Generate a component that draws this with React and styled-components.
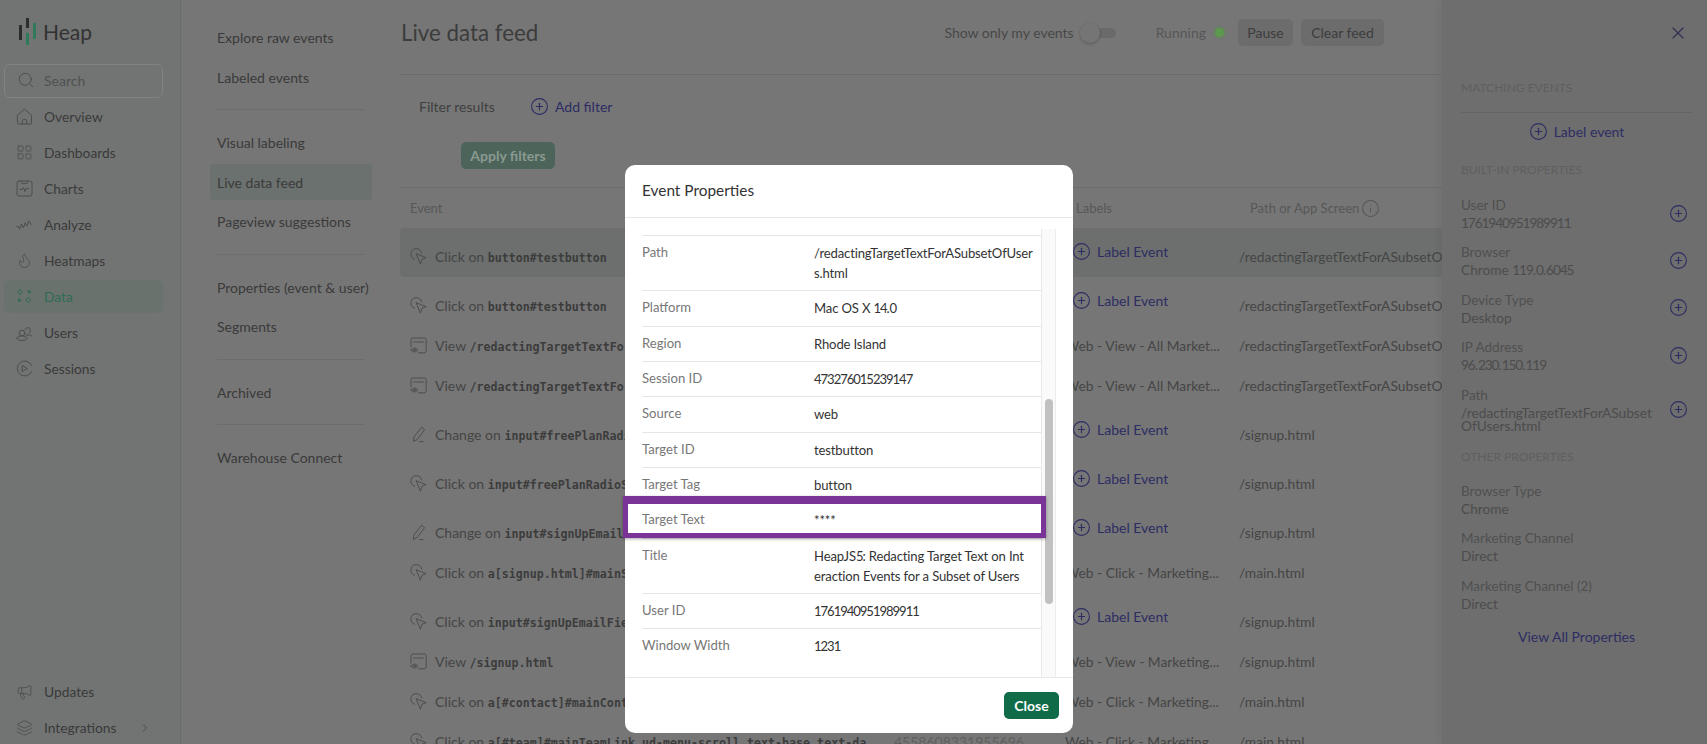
import React from 'react';
import styled, {createGlobalStyle} from 'styled-components';
import {Search, LayoutGrid, Flame, Megaphone, Layers, ChevronRight, CirclePlus, Info, X} from 'lucide-react';

const sans = `Lato, "Liberation Sans", sans-serif`;
const mono = `"DejaVu Sans Mono", "Liberation Mono", monospace`;
const iconGrey = '#4c4e4d';

const Global = createGlobalStyle`
    html, body { margin:0; height:100%; background:#767676; }
    body { font-family:${sans}; overflow:hidden; }
    #root { height:100%; }
    *, *::before, *::after { box-sizing:border-box; }
`;

//icons which the packages do not have
const Svg = styled.svg`
    flex:none;
    fill:none;
    stroke:${p => p.$color || iconGrey};
    stroke-width:1;
    stroke-linecap:round;
    stroke-linejoin:round;
`;
const ClickIcon = () => (
    <Svg width="17" height="17" viewBox="0 0 17 17">
        <path d="M4.6 11.2A5.4 5.4 0 1 1 11.6 5"/>
        <path d="M6.5 5.8l9.6 3.9-4 1.5-1.6 4.6z"/>
    </Svg>
);
const ViewIcon = () => (
    <Svg width="17" height="17" viewBox="0 0 17 17">
        <path d="M8.6 15.8h5.6a2 2 0 0 0 2-2V3a2 2 0 0 0-2-2H3a2 2 0 0 0-2 2v7"/>
        <path d="M3.6 5h9.6"/>
        <path d="M1 13c1-1.3 2.2-1.9 3.4-1.9s2.4.6 3.4 1.9c-1 1.3-2.2 1.9-3.4 1.9S2 14.3 1 13z"/>
        <circle cx="4.4" cy="13" r=".9"/>
    </Svg>
);
const ChangeIcon = () => (
    <Svg width="17" height="17" viewBox="0 0 17 17">
        <path d="M12 1.5l2.6 2.2-7.6 10-3.6 1.6.5-3.9z"/>
        <path d="M9.6 15.6h3.4"/>
    </Svg>
);
const HomeIcon = () => (
    <Svg width="17" height="17" viewBox="0 0 17 17">
        <path d="M1.5 7.2L8.5 1.2l7 6v7.6a1.2 1.2 0 0 1-1.2 1.2H2.7a1.2 1.2 0 0 1-1.2-1.2z"/>
        <path d="M6.3 16v-3.4a1 1 0 0 1 1-1h2.4a1 1 0 0 1 1 1V16"/>
    </Svg>
);
const ChartIcon = () => (
    <Svg width="17" height="17" viewBox="0 0 17 17">
        <rect x="1" y="1" width="15" height="15" rx="2"/>
        <path d="M5.5 1v1.4a1 1 0 0 0 1 1h4a1 1 0 0 0 1-1V1"/>
        <path d="M3.8 9.4h2.6l1.2-2 1.4 4.2 1.2-3h2.4"/>
    </Svg>
);
const AnalyzeIcon = () => (
    <Svg width="17" height="17" viewBox="0 0 17 17">
        <path d="M.8 10.6l1.5-.2 1.2 2.8 2-5.2 1.8 4 2-5.4 1.5 3.6 2-5.4 2.4 3.8"/>
    </Svg>
);
const DataIcon = () => (
    <Svg width="17" height="17" viewBox="0 0 17 17" $color="#2f6b52">
        <path d="M4.2 1.4l2.2 2.6-2.2 2.6L2 4z"/>
        <path d="M13.4 2.4l1.2 1.4-1.2 1.4-1.2-1.4z" fill="#2f6b52"/>
        <path d="M3.4 11l1.2 1.4-1.2 1.4-1.2-1.4z" fill="#2f6b52"/>
        <path d="M12.4 9.8l2.2 2.6-2.2 2.6-2.2-2.6z"/>
    </Svg>
);
const UsersIcon = () => (
    <Svg width="17" height="17" viewBox="0 0 17 17">
        <circle cx="6" cy="9" r="2.8"/>
        <path d="M1 14.2c0-1.4 2.2-2.2 5-2.2s5 .8 5 2.2-2.2 2.2-5 2.2-5-.8-5-2.2z"/>
        <path d="M9 5.6a2.8 2.8 0 1 1 3.8 3.4"/>
        <path d="M10.2 11h3.2c1.4 0 2.6.4 2.6 1.2"/>
    </Svg>
);
const SessionsIcon = () => (
    <Svg width="17" height="17" viewBox="0 0 17 17">
        <path d="M15.6 11.6a7.5 7.5 0 1 1 0-6.2"/>
        <path d="M6.4 5.6l5 2.9-5 2.9z"/>
    </Svg>
);
const PlusIcon = () => <CirclePlus size={19} strokeWidth={1.4}/>;

const HeapLogo = () => (
    <svg width="18" height="28" viewBox="0 0 18 28">
        <rect x="0" y="7" width="3" height="15" fill="#2c2c2c"/>
        <rect x="7" y="0" width="3" height="10" fill="#2c2c2c"/>
        <rect x="7" y="15" width="3" height="12" fill="#2f7a5b"/>
        <rect x="14" y="5" width="3" height="16" fill="#2f7a5b"/>
    </svg>
);

const navItems = [
    {label:'Overview', icon:<HomeIcon/>},
    {label:'Dashboards', icon:<LayoutGrid size={21} strokeWidth={1.2} color={iconGrey}/>},
    {label:'Charts', icon:<ChartIcon/>},
    {label:'Analyze', icon:<AnalyzeIcon/>},
    {label:'Heatmaps', icon:<Flame size={19} strokeWidth={1.25} color={iconGrey}/>},
    {label:'Data', icon:<DataIcon/>, active:true},
    {label:'Users', icon:<UsersIcon/>},
    {label:'Sessions', icon:<SessionsIcon/>},
];

const subNav = [
    ['Explore raw events', 'Labeled events'],
    ['Visual labeling', 'Live data feed', 'Pageview suggestions'],
    ['Properties (event & user)', 'Segments'],
    ['Archived'],
    ['Warehouse Connect'],
];

const longPath = '/redactingTargetTextForASubsetOfUsers.html';
const marketingClick = 'Web - Click - Marketing...';
const marketingView = 'Web - View - Marketing...';
const allMarket = 'Web - View - All Market...';

const rows = [
    {kind:'click', text:'Click on ', code:'button#testbutton', id:'473276015239147', path:longPath, selected:true},
    {kind:'click', text:'Click on ', code:'button#testbutton', id:'473276015239147', path:longPath},
    {kind:'view', text:'View ', code:'/redactingTargetTextForASubsetOfUsers.html', id:'473276015239147', label:allMarket, path:longPath},
    {kind:'view', text:'View ', code:'/redactingTargetTextForASubsetOfUsers.html', id:'473276015239147', label:allMarket, path:longPath},
    {kind:'change', text:'Change on ', code:'input#freePlanRadioSelector', id:'4558608331955696', path:'/signup.html'},
    {kind:'click', text:'Click on ', code:'input#freePlanRadioSelector', id:'4558608331955696', path:'/signup.html'},
    {kind:'change', text:'Change on ', code:'input#signUpEmailField', id:'4558608331955696', path:'/signup.html'},
    {kind:'click', text:'Click on ', code:'a[signup.html]#mainSignUpLink', id:'4558608331955696', label:marketingClick, path:'/main.html'},
    {kind:'click', text:'Click on ', code:'input#signUpEmailField', id:'4558608331955696', path:'/signup.html'},
    {kind:'view', text:'View ', code:'/signup.html', id:'4558608331955696', label:marketingView, path:'/signup.html'},
    {kind:'click', text:'Click on ', code:'a[#contact]#mainContactLink', id:'4558608331955696', label:marketingClick, path:'/main.html'},
    {kind:'click', text:'Click on ', code:'a[#team]#mainTeamLink.ud-menu-scroll.text-base.text-da', id:'4558608331955696', label:marketingClick, path:'/main.html'},
];

const kindIcons = {click:<ClickIcon/>, view:<ViewIcon/>, change:<ChangeIcon/>};

const builtIn = [
    ['User ID', '1761940951989911'],
    ['Browser', 'Chrome 119.0.6045'],
    ['Device Type', 'Desktop'],
    ['IP Address', '96.230.150.119'],
    ['Path', '/redactingTargetTextForASubset\nOfUsers.html'],
];
const otherProps = [
    ['Browser Type', 'Chrome'],
    ['Marketing Channel', 'Direct'],
    ['Marketing Channel (2)', 'Direct'],
];

const eventProps = [
    ['Path', '/redactingTargetTextForASubsetOfUser\ns.html'],
    ['Platform', 'Mac OS X 14.0'],
    ['Region', 'Rhode Island'],
    ['Session ID', '473276015239147'],
    ['Source', 'web'],
    ['Target ID', 'testbutton'],
    ['Target Tag', 'button'],
    ['Target Text', '****', true],
    ['Title', 'HeapJS5: Redacting Target Text on Int\neraction Events for a Subset of Users'],
    ['User ID', '1761940951989911'],
    ['Window Width', '1231'],
];

// the digits of the installed font are wider than the original's
const withDigits = text => text.split(/(\d+)/).map((part, i) => i % 2 ? <Digits key={i}>{part}</Digits> : part);

export default function App() {
    return (
        <Page>
            <Global/>
            <Sidebar>
                <Logo><HeapLogo/><LogoText>Heap</LogoText></Logo>
                <SearchBox><Search size={18} strokeWidth={1.3} color={iconGrey}/><span>Search</span></SearchBox>
                <NavList>
                    {navItems.map(item => (
                        <NavItem key={item.label} $active={item.active}>
                            <IconSlot>{item.icon}</IconSlot>{item.label}
                        </NavItem>
                    ))}
                </NavList>
                <NavFooter>
                    <NavItem><IconSlot><Megaphone size={20} strokeWidth={1.2} color={iconGrey}/></IconSlot>Updates</NavItem>
                    <NavItem>
                        <IconSlot><Layers size={18} strokeWidth={1.25} color={iconGrey}/></IconSlot>Integrations
                        <Chevron><ChevronRight size={12} strokeWidth={1.6} color="#3d3d3d"/></Chevron>
                    </NavItem>
                </NavFooter>
            </Sidebar>

            <SubNav>
                {subNav.map((group, i) => (
                    <SubGroup key={i}>
                        {group.map(label => <SubItem key={label} $active={label === 'Live data feed'}>{label}</SubItem>)}
                    </SubGroup>
                ))}
            </SubNav>

            <Main>
                <Header>
                    <Title>Live data feed</Title>
                    <Controls>
                        <ControlText>Show only my events</ControlText>
                        <Toggle/>
                        <RunningText>Running</RunningText>
                        <StatusDot/>
                        <GreyButton $width="55px" $ml="6px">Pause</GreyButton>
                        <GreyButton $width="83px">Clear feed</GreyButton>
                    </Controls>
                </Header>
                <Filters>
                    <FilterRow>
                        <FilterLabel>Filter results</FilterLabel>
                        <LinkButton><PlusIcon/>Add filter</LinkButton>
                    </FilterRow>
                    <ApplyButton>Apply filters</ApplyButton>
                </Filters>
                <TableHead>
                    <span>Event</span>
                    <span/>
                    <span>Labels</span>
                    <PathHead>Path or App Screen <Info size={19} strokeWidth={1.3}/></PathHead>
                </TableHead>
                {rows.map((row, i) => (
                    <EventRow key={i} $tall={!row.label} $selected={row.selected}>
                        <EventCell $tall={!row.label}>
                            {kindIcons[row.kind]}
                            <span>{row.text}<Code>{row.code}</Code></span>
                        </EventCell>
                        <IdCell $tall={!row.label}>{row.id}</IdCell>
                        {row.label
                            ? <LabelCell>{row.label}</LabelCell>
                            : <LabelCell $button><LinkButton><PlusIcon/>Label Event</LinkButton></LabelCell>}
                        <PathCell $tall={!row.label}>{row.path}</PathCell>
                    </EventRow>
                ))}
            </Main>

            <Panel>
                <CloseRow><X size={20} strokeWidth={1.4} color="#2f2f55"/></CloseRow>
                <SectionTitle $line>MATCHING EVENTS</SectionTitle>
                <PanelAction><LinkButton><PlusIcon/>Label event</LinkButton></PanelAction>
                <SectionTitle>BUILT-IN PROPERTIES</SectionTitle>
                {builtIn.map(([name, value]) => (
                    <Prop key={name}>
                        <div>
                            <PropName>{name}</PropName>
                            <PropValue>{withDigits(value)}</PropValue>
                        </div>
                        <PropAdd><PlusIcon/></PropAdd>
                    </Prop>
                ))}
                <SectionTitle $other>OTHER PROPERTIES</SectionTitle>
                {otherProps.map(([name, value]) => (
                    <Prop key={name} $spaced>
                        <div>
                            <PropName>{name}</PropName>
                            <PropValue>{value}</PropValue>
                        </div>
                    </Prop>
                ))}
                <ViewAll>View All Properties</ViewAll>
            </Panel>

            <Modal>
                <ModalTitle>Event Properties</ModalTitle>
                <ModalBody>
                    <PropTable>
                        {eventProps.map(([name, value, marked]) => (
                            <PropRow key={name} $marked={marked}>
                                <PropKey>{name}</PropKey>
                                <PropVal>{withDigits(value)}</PropVal>
                            </PropRow>
                        ))}
                    </PropTable>
                    <Track><Thumb/></Track>
                </ModalBody>
                <ModalFooter><CloseButton>Close</CloseButton></ModalFooter>
            </Modal>
        </Page>
    );
}

//styling using styled-components
const Page = styled.div`
    display:flex;
    height:744px;
    width:1707px;
    overflow:hidden;
    position:relative;
    background:#767676;
    color:#3a3a3a;
`;
const Digits = styled.span`
    letter-spacing:-.08em;
`;

const Sidebar = styled.aside`
    width:181px;
    flex:none;
    display:flex;
    flex-direction:column;
    background:#727473;
    border-right:1px solid #686b6a;
    padding:18px 17px 0 4px;
`;
const Logo = styled.div`
    display:flex;
    align-items:flex-start;
    gap:6px;
    height:46px;
    padding-left:15px;
`;
const LogoText = styled.span`
    font-size:21px;
    line-height:28px;
    color:#333;
`;
const SearchBox = styled.div`
    display:flex;
    align-items:center;
    gap:9px;
    height:34px;
    padding:0 0 2px 12px;
    border:1px solid #808382;
    border-radius:6px;
    font-size:14px;
    color:#4f5150;
`;
const NavList = styled.nav`
    display:flex;
    flex-direction:column;
    gap:3px;
    margin-top:1.5px;
`;
const NavItem = styled.div`
    display:flex;
    align-items:center;
    height:33px;
    border-radius:6px;
    padding-left:12px;
    font-size:13.8px;
    background:${p => p.$active ? '#6a726e' : 'transparent'};
    color:${p => p.$active ? '#2f6b52' : '#3a3a3a'};
`;
const IconSlot = styled.span`
    display:flex;
    justify-content:center;
    width:17px;
    margin-right:11px;
    flex:none;
`;
const NavFooter = styled.div`
    margin-top:auto;
    display:flex;
    flex-direction:column;
    gap:3px;
    height:69px;
`;
const Chevron = styled.span`
    display:flex;
    margin-left:auto;
    margin-right:12px;
`;

const SubNav = styled.div`
    width:219px;
    flex:none;
    padding:19.5px 35px 0 36px;
`;
const SubGroup = styled.div`
    display:flex;
    flex-direction:column;
    gap:3.5px;
    border-bottom:1px solid #6d6d6d;
    padding-bottom:14px;
    margin-bottom:14.5px;
    &:last-child { border-bottom:none; }
`;
const SubItem = styled.div`
    display:flex;
    align-items:center;
    height:36px;
    margin:0 -7px;
    padding-left:7px;
    border-radius:4px;
    font-size:14px;
    white-space:nowrap;
    background:${p => p.$active ? '#6b716e' : 'transparent'};
`;

const Main = styled.main`
    flex:1;
    min-width:0;
    overflow:hidden;
`;
const Header = styled.header`
    display:flex;
    align-items:center;
    height:75px;
    border-bottom:1px solid #6c6c6c;
    padding-bottom:9px;
`;
const Title = styled.h1`
    margin:0 0 0 1px;
    font-size:22.3px;
    font-weight:400;
    color:#3c3c3c;
`;
const Controls = styled.div`
    margin-left:auto;
    display:flex;
    align-items:center;
    gap:8px;
    padding-right:58px;
    font-size:14px;
`;
const ControlText = styled.span`
    color:#484848;
`;
const Toggle = styled.span`
    position:relative;
    width:31px;
    height:10px;
    margin-left:3px;
    border-radius:5px;
    background:#6a6a6a;
    &::before {
        content:'';
        position:absolute;
        left:-5px;
        top:-5px;
        width:20px;
        height:20px;
        border-radius:50%;
        background:#757575;
        box-shadow:0 1px 3px rgba(0,0,0,.25);
    }
`;
const RunningText = styled.span`
    margin-left:32px;
    color:#565656;
`;
const StatusDot = styled.span`
    width:9px;
    height:9px;
    margin-left:1px;
    border-radius:50%;
    background:#5c9a4e;
    box-shadow:0 0 0 2px #6d7d68;
`;
const GreyButton = styled.span`
    display:flex;
    align-items:center;
    justify-content:center;
    width:${p => p.$width};
    height:27px;
    border-radius:5px;
    background:#6c6c6c;
    color:#3c3c3c;
    margin-left:${p => p.$ml || '0'};
`;

const Filters = styled.div`
    height:113px;
    border-bottom:1px solid #6c6c6c;
    padding-top:21px;
`;
const FilterRow = styled.div`
    display:flex;
    align-items:center;
    height:20px;
    padding-left:19px;
    font-size:14px;
`;
const FilterLabel = styled.span`
    width:111px;
    color:#404040;
`;
const LinkButton = styled.span`
    display:inline-flex;
    align-items:center;
    gap:6px;
    font-size:14px;
    color:#2d2d63;
`;
const ApplyButton = styled.span`
    display:flex;
    align-items:center;
    justify-content:center;
    width:94px;
    height:27px;
    margin:26px 0 0 61px;
    border-radius:5px;
    background:#4c6459;
    color:#8a9a91;
    font-size:14px;
    font-weight:700;
`;

const columns = '494px 171px 174px 1fr';
const TableHead = styled.div`
    display:grid;
    grid-template-columns:${columns};
    align-items:center;
    height:40px;
    font-size:13px;
    color:#575757;
    & > span { padding-left:10px; }
    & > span:nth-child(3) { padding-left:11px; }
`;
const PathHead = styled.span`
    display:flex;
    align-items:center;
    gap:2px;
    white-space:nowrap;
    &&& { padding-left:11px; }
`;
const EventRow = styled.div`
    display:grid;
    grid-template-columns:${columns};
    align-items:center;
    height:${p => p.$tall ? '49px' : '40px'};
    padding-bottom:${p => p.$tall ? '0' : '2px'};
    border-radius:${p => p.$selected ? '4px 0 0 4px' : '0'};
    background:${p => p.$selected ? '#6c6f6d' : 'transparent'};
    font-size:13.8px;
    color:#454545;
    white-space:nowrap;
`;
const EventCell = styled.div`
    display:flex;
    align-items:center;
    gap:8px;
    padding:${p => p.$tall ? '7px 0 0 10px' : '0 0 0 10px'};
    overflow:hidden;
    font-size:14px;
`;
const Code = styled.code`
    font-family:${mono};
    font-size:11.65px;
    font-weight:700;
    color:#3c3c3c;
`;
const IdCell = styled.div`
    padding-top:${p => p.$tall ? '7px' : '0'};
    color:#5f5f5f;
    font-size:14px;
`;
const LabelCell = styled.div`
    padding-left:${p => p.$button ? '7px' : '0'};
    min-width:0;
    overflow:hidden;
    white-space:nowrap;
`;
const PathCell = styled.div`
    padding-top:${p => p.$tall ? '7px' : '0'};
    overflow:hidden;
`;

const Panel = styled.aside`
    width:265px;
    flex:none;
    background:#6e6e6e;
    box-shadow:-3px 0 8px rgba(0,0,0,.05);
    padding:0 15px 0 19px;
    color:#4a4a4a;
    font-size:14px;
    position:relative;
`;
const CloseRow = styled.div`
    display:flex;
    justify-content:flex-end;
    align-items:center;
    height:66px;
    padding-right:4px;
`;
const SectionTitle = styled.div`
    height:${p => p.$line ? '48px' : '18px'};
    line-height:${p => p.$line ? '45px' : '18px'};
    margin-top:${p => p.$line ? '-1px' : p.$other ? '16px' : '0'};
    margin-bottom:${p => p.$line ? '0' : p.$other ? '15px' : '16px'};
    font-size:12px;
    color:#5f5f5f;
    border-bottom:${p => p.$line ? '1px solid #656565' : 'none'};
`;
const PanelAction = styled.div`
    display:flex;
    justify-content:center;
    align-items:center;
    height:48px;
    padding-bottom:12px;
`;
const Prop = styled.div`
    display:flex;
    justify-content:space-between;
    align-items:center;
    margin-bottom:${p => p.$spaced ? '13.8px' : '13.4px'};
`;
const PropName = styled.div`
    line-height:21px;
    font-size:13.5px;
    color:#505050;
`;
const PropValue = styled.div`
    line-height:13px;
    font-size:13.7px;
    white-space:pre-line;
    color:#4c4c4c;
`;
const PropAdd = styled.span`
    display:flex;
    color:#2d2d63;
    margin:2px 4px 0 0;
`;
const ViewAll = styled.div`
    text-align:center;
    margin-top:18px;
    color:#2d2d63;
    font-size:14px;
`;

//modal sits over the dimmed page
const Modal = styled.div`
    position:absolute;
    left:625px;
    top:165px;
    width:448px;
    height:568px;
    display:flex;
    flex-direction:column;
    background:#fff;
    border-radius:10px;
`;
const ModalTitle = styled.div`
    height:53px;
    flex:none;
    display:flex;
    align-items:center;
    padding:0 0 3px 17px;
    border-bottom:1px solid #e8e8e8;
    font-size:15.4px;
    color:#333;
`;
const ModalBody = styled.div`
    flex:1;
    display:flex;
    padding:11px 17px 0;
    min-height:0;
`;
const PropTable = styled.div`
    width:399px;
    padding-top:6px;
`;
const PropRow = styled.div`
    position:relative;
    display:grid;
    grid-template-columns:172px 1fr;
    padding:6px 0 7.33px;
    border-top:1px solid ${p => p.$marked ? 'transparent' : '#e6e6e6'};
    ${p => p.$marked && `
        &::after {
            content:'';
            position:absolute;
            z-index:1;
            left:-19px;
            right:-5px;
            top:-7px;
            height:42px;
            border:5px solid #7a3396;
            border-top-width:8px;
            box-shadow:0 1px 3px rgba(0,0,0,.35);
        }
    `}
`;
const PropKey = styled.div`
    font-size:13.1px;
    line-height:20px;
    color:#777;
`;
const PropVal = styled.div`
    font-size:13.1px;
    letter-spacing:-.15px;
    line-height:20px;
    margin-top:1px;
    color:#333;
    white-space:pre-line;
`;
const Track = styled.div`
    width:15px;
    flex:none;
    position:relative;
    background:#fafafa;
    border-left:1px solid #e8e8e8;
    border-right:1px solid #ececec;
`;
const Thumb = styled.div`
    position:absolute;
    left:3px;
    width:8px;
    top:170px;
    height:205px;
    border-radius:4px;
    background:#c1c1c1;
`;
const ModalFooter = styled.div`
    height:56px;
    flex:none;
    display:flex;
    justify-content:flex-end;
    padding:14px 14px 0 0;
    border-top:1px solid #e8e8e8;
`;
const CloseButton = styled.span`
    display:flex;
    align-items:center;
    justify-content:center;
    width:55px;
    height:27px;
    border-radius:5px;
    background:#0f6b48;
    color:#fff;
    font-size:14px;
    font-weight:700;
`;
